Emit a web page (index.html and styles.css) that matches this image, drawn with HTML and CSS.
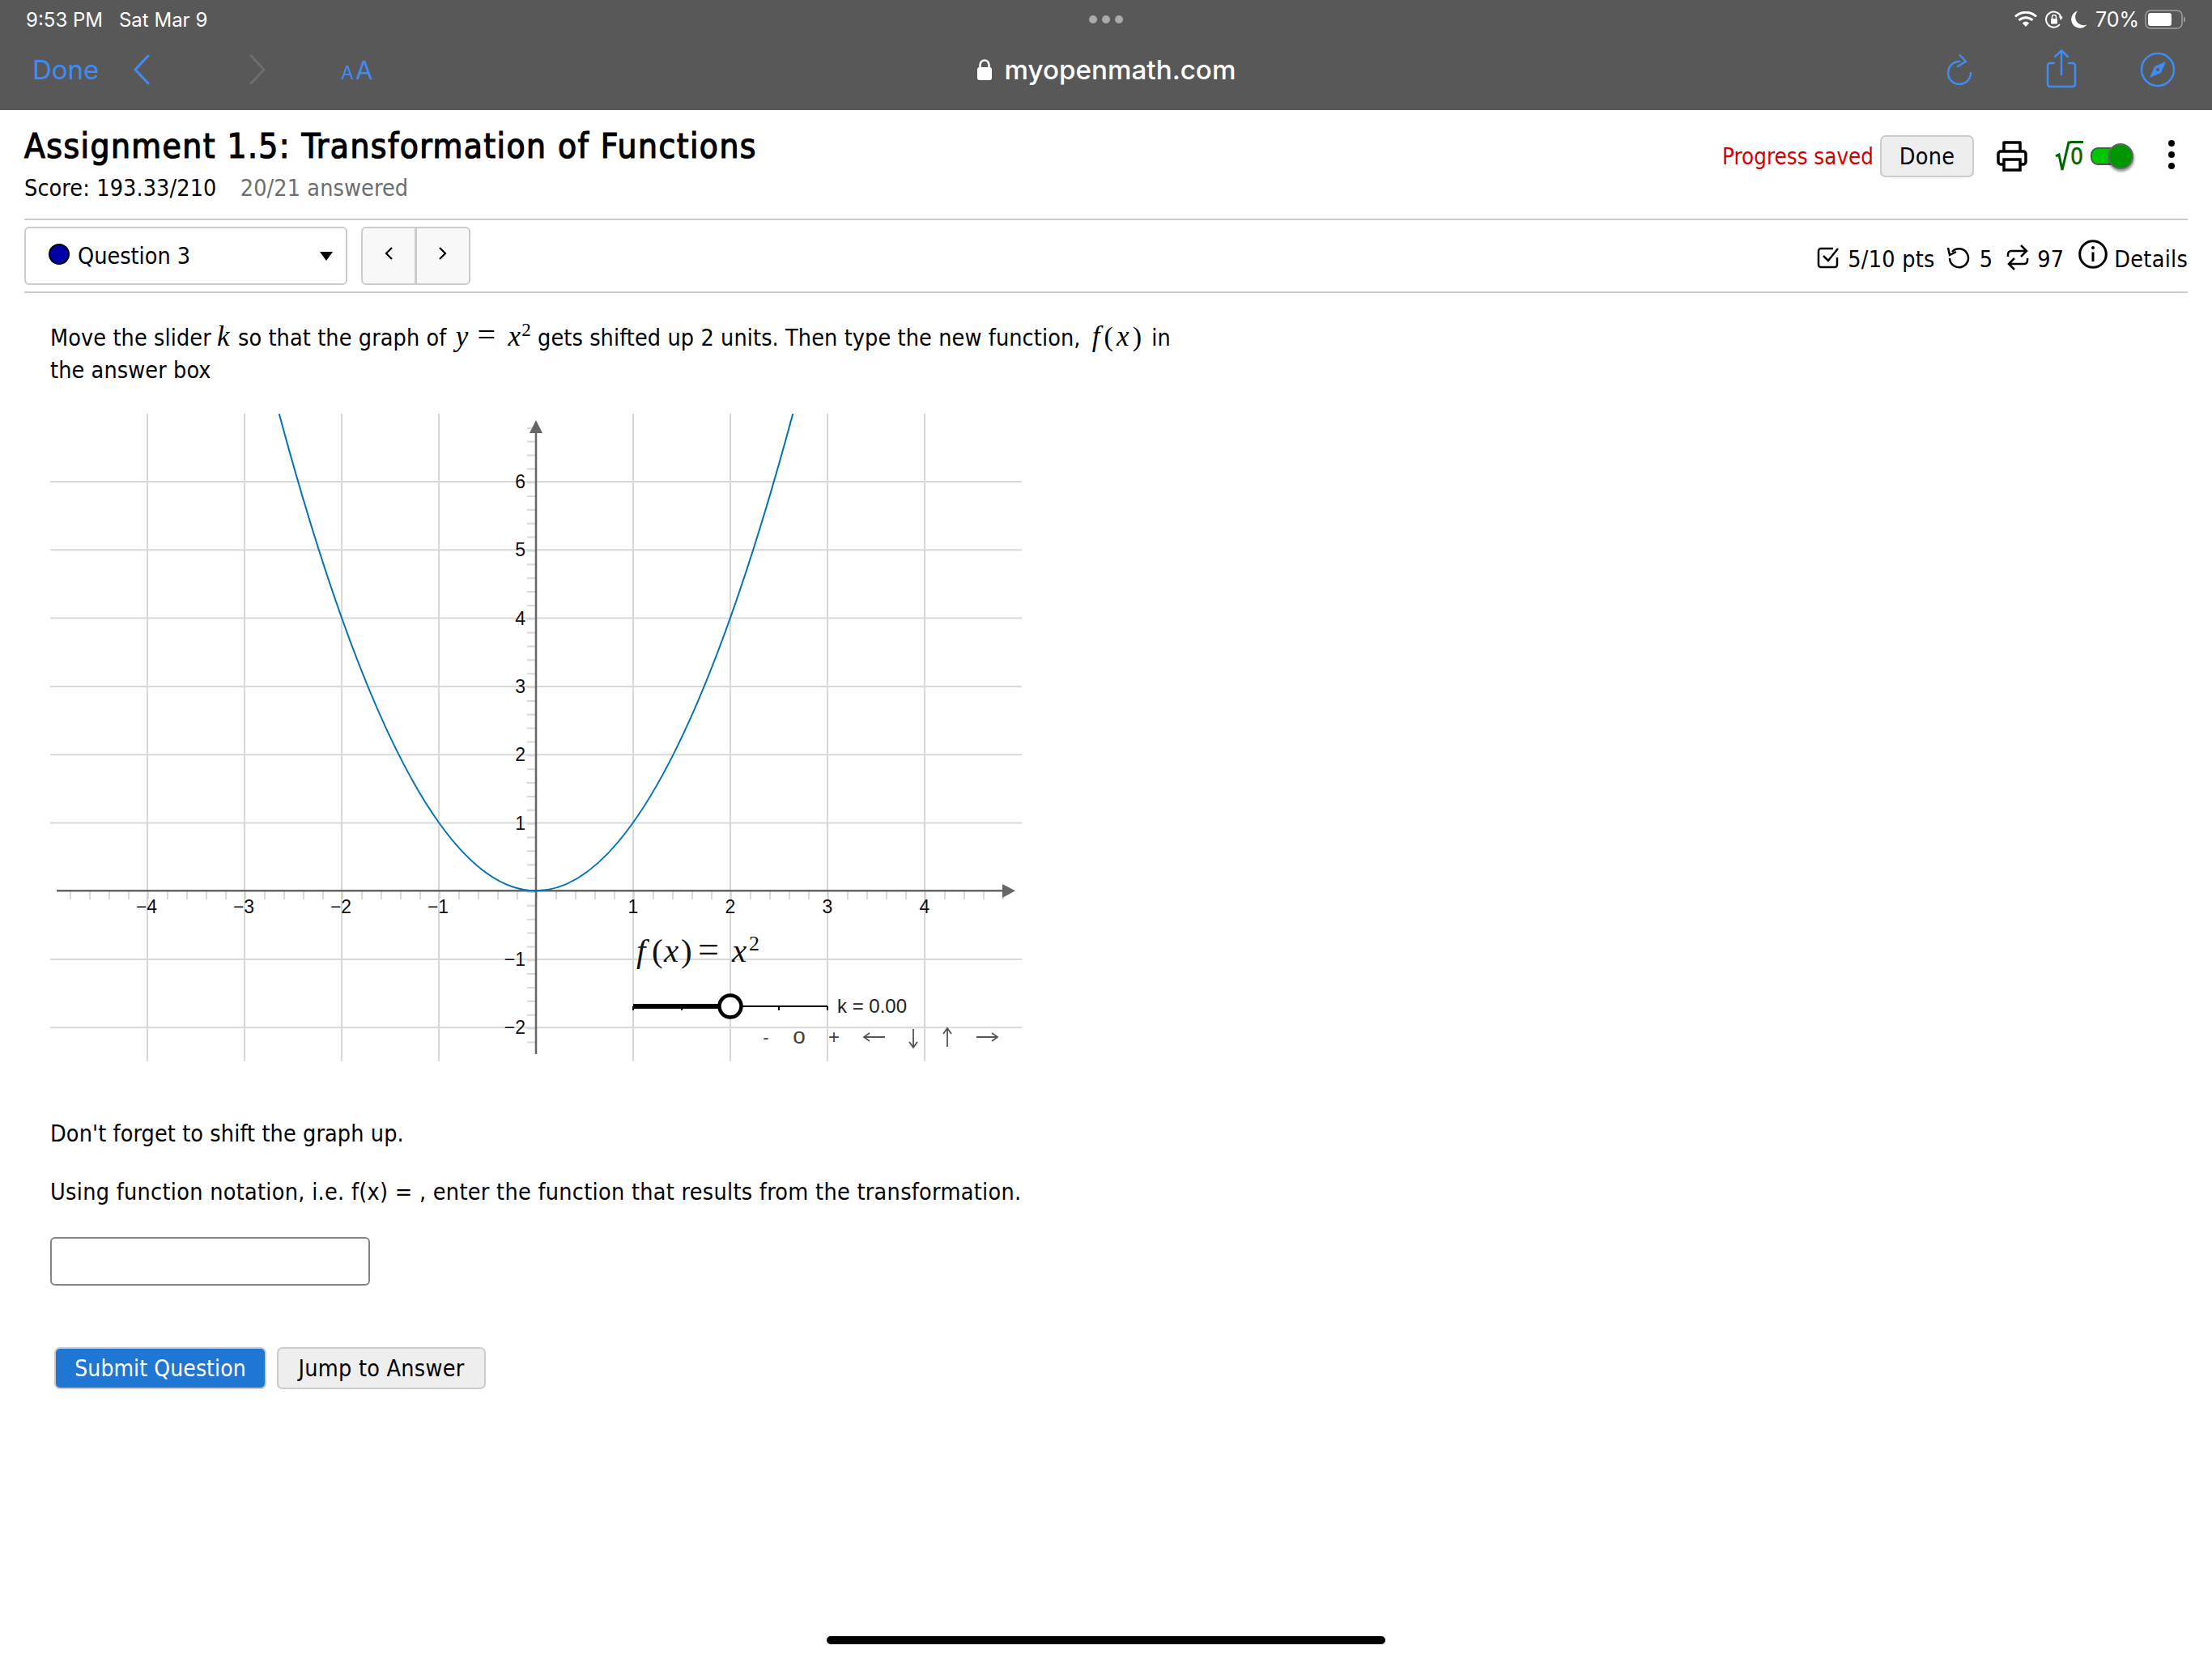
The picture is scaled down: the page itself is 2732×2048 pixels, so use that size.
FILE: index.html
```html
<!DOCTYPE html>
<html lang="en">
<head>
<meta charset="utf-8">
<title>Assignment 1.5</title>
<link rel="stylesheet" href="styles.css">
</head>
<body>
<header class="chrome">
  <div class="status">
    <div class="status-left"><span>9:53 PM</span><span>Sat Mar 9</span></div>
    <div class="dots"><i></i><i></i><i></i></div>
    <div class="status-right">
      <svg class="st-wifi" viewBox="0 0 28 20"><path d="M1 6.500C8.500 -0.500 19.500 -0.500 27 6.500M5.500 11C10.500 6.500 17.500 6.500 22.500 11" fill="none" stroke="#fff" stroke-width="3"/><path d="M9.800 14.500C12.300 12.300 15.700 12.300 18.200 14.500L14 19Z" fill="#fff"/></svg>
      <svg class="st-lock" viewBox="0 0 22 22"><path d="M18 17A9.500 9.500 0 1 1 19.500 8" fill="none" stroke="#fff" stroke-width="2"/><path d="M17 7l5 1-3 4z" fill="#fff"/><rect x="7" y="10" width="8" height="6.500" rx="1" fill="#fff"/><path d="M8.500 10V8a2.500 2.500 0 0 1 5 0v2" fill="none" stroke="#fff" stroke-width="1.500"/></svg>
      <svg class="st-moon" viewBox="0 0 20 22"><path d="M8 0.500A10.500 10.500 0 0 0 19.500 17.500A10.800 10.800 0 1 1 8 0.500Z" fill="#fff"/></svg>
      <span class="st-pct">70%</span>
      <svg class="st-batt" viewBox="0 0 50 24"><rect x="1" y="1" width="45" height="22" rx="6" fill="none" stroke="#a0a0a0" stroke-width="1.500"/><rect x="4" y="4" width="29" height="16" rx="3" fill="#fff"/><path d="M48 8.500c1.500.5 2 2 2 3.500s-.5 3-2 3.500z" fill="#a0a0a0"/></svg>
    </div>
  </div>
  <div class="toolbar">
    <div class="tb-left">
      <span class="tb-done">Done</span>
      <svg class="tb-back" viewBox="0 0 22 38"><path d="M19 2L3 19L19 36" fill="none" stroke="#408cf5" stroke-width="3" stroke-linecap="round" stroke-linejoin="round"/></svg>
      <svg class="tb-fwd" viewBox="0 0 22 38"><path d="M3 2L19 19L3 36" fill="none" stroke="#6e6e6e" stroke-width="3" stroke-linecap="round" stroke-linejoin="round"/></svg>
      <span class="tb-aa"><small>A</small>A</span>
    </div>
    <div class="tb-url">
      <svg class="tb-lock" viewBox="0 0 20 26"><rect x="1" y="10" width="18" height="16" rx="3" fill="#fff"/><path d="M4.500 11V7a5.500 5.500 0 0 1 11 0v4" fill="none" stroke="#fff" stroke-width="2.500"/></svg>
      <span>myopenmath.com</span>
    </div>
    <div class="tb-right">
      <svg class="tb-reload" viewBox="0 0 32 40"><path d="M15 10A14 14 0 1 0 29 24" fill="none" stroke="#408cf5" stroke-width="2.500" stroke-linecap="round"/><path d="M15.500 2L23 10L13 16" fill="none" stroke="#408cf5" stroke-width="2.500" stroke-linecap="round" stroke-linejoin="round"/></svg>
      <svg class="tb-share" viewBox="0 0 38 48"><path d="M11 17H5a3 3 0 0 0-3 3v23a3 3 0 0 0 3 3h28a3 3 0 0 0 3-3V20a3 3 0 0 0-3-3h-6" fill="none" stroke="#408cf5" stroke-width="2.500"/><path d="M19 31V2M11 9L19 1.500L27 9" fill="none" stroke="#408cf5" stroke-width="2.500" stroke-linecap="round" stroke-linejoin="round"/></svg>
      <svg class="tb-compass" viewBox="0 0 44 44"><circle cx="22" cy="22" r="20" fill="none" stroke="#408cf5" stroke-width="2.500"/><path d="M32 12L18 18L12 32L26 26Z" fill="#408cf5"/><circle cx="22" cy="22" r="2" fill="#585858"/></svg>
    </div>
  </div>
</header>

<main class="page">
  <section class="head">
    <div class="head-text">
      <h1>Assignment 1.5: Transformation of Functions</h1>
      <p class="score">Score: 193.33/210 <span class="answered">20/21 answered</span></p>
    </div>
    <div class="head-tools">
      <span class="saved">Progress saved</span>
      <button class="btn btn-done">Done</button>
      <svg class="ic-print" viewBox="0 0 38 38"><path d="M9 13V2h20v11M9 29H5a3 3 0 0 1-3-3V16a3 3 0 0 1 3-3h28a3 3 0 0 1 3 3v10a3 3 0 0 1-3 3h-4" fill="none" stroke="#000" stroke-width="3.500" stroke-linejoin="round"/><rect x="9" y="23" width="20" height="13" fill="none" stroke="#000" stroke-width="3.500"/></svg>
      <span class="sqrt"><svg viewBox="0 0 20 38"><path d="M1 19L5 17L9 36L17 2H20" fill="none" stroke="#006400" stroke-width="3"/></svg><span class="sqrt-n">0</span></span>
      <span class="toggle"><i></i></span>
      <span class="kebab"><i></i><i></i><i></i></span>
    </div>
  </section>
  <section class="qbar">
    <div class="qselect"><i class="qdot"></i><span class="qname">Question 3</span><i class="qcaret"></i></div>
    <div class="qnav">
      <span class="qnav-btn"><svg viewBox="0 0 12 18"><path d="M10 2L3 9L10 16" fill="none" stroke="#000" stroke-width="2.200"/></svg></span>
      <span class="qnav-btn"><svg viewBox="0 0 12 18"><path d="M2 2L9 9L2 16" fill="none" stroke="#000" stroke-width="2.200"/></svg></span>
    </div>
    <div class="qmeta">
      <svg class="ic-check" viewBox="0 0 28 28"><path d="M25 14v9a3 3 0 0 1-3 3H5a3 3 0 0 1-3-3V6a3 3 0 0 1 3-3h15" fill="none" stroke="#000" stroke-width="2.500"/><path d="M8 12l6 6L26 3" fill="none" stroke="#000" stroke-width="2.500"/></svg>
      <span class="m-pts">5/10 pts</span>
      <svg class="ic-undo" viewBox="0 0 28 28"><path d="M6 7A11.500 11.500 0 1 1 3 15" fill="none" stroke="#000" stroke-width="2.500"/><path d="M1 2L3 11L11 7" fill="none" stroke="#000" stroke-width="2.500"/></svg>
      <span class="m-try">5</span>
      <svg class="ic-retry" viewBox="0 0 28 32"><path d="M2 15V12a4 4 0 0 1 4-4H25M18 1L25 8L18 15" fill="none" stroke="#000" stroke-width="2.500"/><path d="M26 17v3a4 4 0 0 1-4 4H3M10 17L3 24L10 31" fill="none" stroke="#000" stroke-width="2.500"/></svg>
      <span class="m-ret">97</span>
      <svg class="ic-info" viewBox="0 0 36 36"><circle cx="18" cy="18" r="16.300" fill="none" stroke="#000" stroke-width="3"/><path d="M18 15.500V27" stroke="#000" stroke-width="3"/><circle cx="18" cy="10" r="2" fill="#000"/></svg>
      <span class="m-det">Details</span>
    </div>
  </section>

  <section class="question">
    <p class="prompt">Move the slider <span class="math mk">k</span> so that the graph of <span class="math my">y</span> <span class="mathr meq">=</span> <span class="math mx">x</span><sup class="sup">2</sup> gets shifted up 2 units. Then type the new function, <span class="math mf">f</span><span class="mathr">(</span><span class="math mx2">x</span><span class="mathr mclose">)</span> in the answer box</p>

    <svg class="graph" viewBox="62 510 1200 800" width="1200" height="800">
      <g class="grid">
        <path d="M182 510V1310M302 510V1310M422 510V1310M542 510V1310M782 510V1310M902 510V1310M1022 510V1310M1142 510V1310"/>
        <path d="M62 594H1262M62 678.300H1262M62 762.600H1262M62 846.900H1262M62 931.200H1262M62 1015.500H1262M62 1184H1262M62 1268.300H1262"/>
      </g>
      <line class="ticks" x1="86" y1="1105" x2="1240" y2="1105" stroke-width="10" stroke-dasharray="2 22"/>
      <line class="ticks" x1="656.500" y1="526.700" x2="656.500" y2="1302" stroke-width="11" stroke-dasharray="2 14.860"/>
      <path class="axis" d="M70 1099.300H1240M662 530V1301"/>
      <path class="arrow" d="M1254 1099.300L1238 1091V1108ZM662 518L654 534H670Z"/>
      <path class="curve" d="M344.700 510Q662 1688.600 979.300 510"/>
      <g class="tick-x">
        <text x="181" y="1127">−4</text><text x="301" y="1127">−3</text><text x="421" y="1127">−2</text><text x="541" y="1127">−1</text>
        <text x="782" y="1127">1</text><text x="902" y="1127">2</text><text x="1022" y="1127">3</text><text x="1142" y="1127">4</text>
      </g>
      <g class="tick-y">
        <text x="649" y="602">6</text><text x="649" y="686">5</text><text x="649" y="771">4</text><text x="649" y="855">3</text><text x="649" y="939">2</text><text x="649" y="1024">1</text><text x="649" y="1192">−1</text><text x="649" y="1276">−2</text>
      </g>
      <text class="fx" y="1187"><tspan class="it" x="786">f</tspan><tspan x="805">(</tspan><tspan class="it" x="820">x</tspan><tspan x="841">)</tspan><tspan class="fx-eq" x="862">=</tspan><tspan class="it" x="904">x</tspan><tspan class="fx-sup" x="925" y="1173">2</tspan></text>
      <path class="slider-thin" d="M902 1242H1022M842 1242V1247M962 1242V1247M1022 1242V1247M782 1242V1247"/>
      <path class="slider-thick" d="M782 1242H902"/>
      <circle class="slider-knob" cx="902" cy="1242" r="13.500"/>
      <text class="k" x="1034" y="1250">k = 0.00</text>
      <g class="ctl">
        <text class="ctl-small" x="946" y="1288">-</text><text class="ctl-o" x="987" y="1288">o</text><text class="ctl-plus" x="1030" y="1288">+</text>
      </g>
      <path class="ctl-arrows" d="M1067 1280H1093M1074 1275L1067 1280L1074 1285M1128 1270V1292M1123 1286L1128 1293L1133 1286M1170 1292V1270M1165 1276L1170 1269L1175 1276M1206 1280H1232M1225 1275L1232 1280L1225 1285"/>
    </svg>

    <p class="hint">Don't forget to shift the graph up.</p>
    <p class="instr">Using function notation, i.e. f(x) = , enter the function that results from the transformation.</p>
    <input class="answer" type="text" aria-label="answer">
    <div class="actions">
      <button class="btn btn-primary">Submit Question</button>
      <button class="btn btn-plain">Jump to Answer</button>
    </div>
  </section>
</main>
<div class="home"><i></i></div>
</body>
</html>
```
FILE: styles.css
```css
* { box-sizing: border-box; }
html, body { margin: 0; padding: 0; }
body {
  width: 2732px;
  height: 2048px;
  background: #fff;
  color: #000;
  font-family: "DejaVu Sans", sans-serif;
  font-stretch: condensed;
  font-size: 28.5px;
  letter-spacing: .25px;
  display: flex;
  flex-direction: column;
  overflow: hidden;
}
.chrome { height: 136px; background: #585858; font-family: Inter, sans-serif; font-stretch: normal; letter-spacing: 0; flex: none; }

.status { height: 48px; display: grid; grid-template-columns: 1fr auto 1fr; align-items: center; padding: 0 32px; color: #fff; font-size: 24px; }
.status-left { display: flex; gap: 20px; }
.dots { display: flex; gap: 6px; }
.dots i { width: 10px; height: 10px; border-radius: 50%; background: #aaa; }
.status-right { display: flex; align-items: center; justify-content: flex-end; gap: 10px; margin-right: 1px; }
.st-wifi { width: 28px; height: 20px; }
.st-lock { width: 22px; height: 22px; }
.st-moon { width: 20px; height: 22px; }
.st-pct { font-size: 25px; }
.st-batt { width: 50px; height: 24px; margin-left: -3px; }

.toolbar { height: 88px; display: grid; grid-template-columns: 1fr auto 1fr; align-items: center; padding-bottom: 12px; }
.tb-left { display: flex; align-items: center; padding-left: 40px; color: #408cf5; }
.tb-done { font-size: 33px; width: 124px; }
.tb-back { width: 22px; height: 38px; }
.tb-fwd { width: 22px; height: 38px; margin-left: 121px; }
.tb-aa { font-size: 31px; margin-left: 92px; }
.tb-aa small { font-size: 23px; margin-right: 2px; }
.tb-url { display: flex; align-items: center; gap: 15px; color: #fff; font-size: 33.2px; font-weight: 500; }
.tb-lock { width: 20px; height: 26px; }
.tb-right { display: flex; align-items: center; justify-content: flex-end; padding-right: 45px; }
.tb-reload { width: 32px; height: 40px; }
.tb-share { width: 38px; height: 48px; margin-left: 90px; margin-bottom: 2px; }
.tb-compass { width: 44px; height: 44px; margin-left: 78px; }

.page { padding: 0 30px; flex: 1; }

.head { height: 136px; border-bottom: 2px solid #ccc; display: flex; justify-content: space-between; }
h1 { margin: 0; padding-top: 20px; font-size: 42px; line-height: 50px; font-weight: 400; letter-spacing: 1.450px; -webkit-text-stroke: 1.200px #000; }
.score { margin: 0; padding-top: 8px; line-height: 38px; letter-spacing: .1px; }
.answered { color: #6e6e6e; margin-left: 21px; }
.head-tools { display: flex; align-items: center; height: 114px; }
.saved { color: #d40000; font-size: 27.500px; letter-spacing: 0; }
.btn { font: inherit; font-stretch: condensed; letter-spacing: inherit; border-radius: 7px; border: 2px solid #ccc; background: #eee; color: #000; padding: 0; }
.btn-done { width: 116px; height: 52px; margin-left: 8px; }
.ic-print { width: 38px; height: 38px; margin-left: 28px; }
.sqrt { display: flex; align-items: center; margin-left: 34px; color: #006400; width: 44px; }
.sqrt svg { width: 20px; height: 38px; }
.sqrt-n { font-size: 28px; line-height: 34px; height: 36px; border-top: 3px solid #006400; margin-left: -1px; margin-top: -2px; -webkit-text-stroke: .5px #006400; }
.toggle { width: 52px; height: 32px; display: flex; align-items: center; position: relative; }
.toggle::before { content: ""; width: 36px; height: 18px; border-radius: 9px; background: #00c800; border: 2px solid #555; }
.toggle i { position: absolute; right: -1px; top: 0; width: 32px; height: 32px; border-radius: 50%; background: #009600; border: 2px solid #666; box-shadow: 1px 3px 3px rgba(0,0,0,.4); }
.kebab { display: flex; flex-direction: column; gap: 6px; margin-left: 44px; margin-right: 16px; margin-top: -4px; }
.kebab i { width: 8px; height: 8px; border-radius: 50%; background: #000; }

.qbar { height: 90px; border-bottom: 2px solid #ccc; display: flex; align-items: flex-start; padding-top: 8px; }
.qselect { width: 399px; height: 72px; border: 2px solid #ccc; border-radius: 6px; display: flex; align-items: center; padding: 0 16px 0 28px; }
.qdot { width: 26px; height: 26px; border-radius: 50%; background: #0000a8; border: 2px solid #000; flex: none; margin-top: -4px; }
.qname { margin-left: 10px; flex: 1; letter-spacing: 0; }
.qcaret { width: 0; height: 0; border-left: 8px solid transparent; border-right: 8px solid transparent; border-top: 11px solid #000; }
.qnav { width: 135px; height: 72px; margin-left: 17px; display: flex; border: 2px solid #ccc; border-radius: 6px; background: #f8f8f8; }
.qnav-btn { flex: 1; display: flex; align-items: center; justify-content: center; padding-bottom: 6px; }
.qnav-btn + .qnav-btn { border-left: 3px solid #ccc; }
.qnav-btn svg { width: 12px; height: 18px; }
.qmeta { margin-left: auto; height: 72px; display: flex; align-items: center; padding-top: 8px; }
.qmeta svg { flex: none; }
.ic-check { width: 28px; height: 28px; margin-top: -4px; }
.m-pts { margin-left: 10px; }
.ic-undo { width: 28px; height: 28px; margin-left: 15px; margin-top: -4px; }
.m-try { margin-left: 12px; }
.ic-retry { width: 28px; height: 32px; margin-left: 17px; margin-top: -5px; }
.m-ret { margin-left: 10px; }
.ic-info { width: 36px; height: 36px; margin-left: 18px; margin-top: -13px; }
.m-det { margin-left: 8px; }

.question { padding-left: 32px; }
.prompt { margin: 0; width: 1400px; padding-top: 36px; line-height: 40px; letter-spacing: .1px; }
.math { font-family: "Liberation Serif", serif; font-style: italic; font-size: 35px; font-stretch: normal; line-height: 0; }
.mathr { font-family: "Liberation Serif", serif; font-size: 34px; font-stretch: normal; line-height: 0; }
.mk { margin-left: -1px; margin-right: 2px; }
.my { margin-left: 3px; }
.meq { margin: 0 3px; font-size: 40px; }
.mx { margin-left: 4px; }
.mx2 { margin: 0 4px; }
.mf { margin-left: 6px; margin-right: 5px; }
.mclose { margin-right: 4px; }
.sup { font-family: "Liberation Serif", serif; font-size: 23px; line-height: 0; vertical-align: 12px; margin-left: 1px; }

.graph { display: block; margin-top: 33px; }
.grid path { fill: none; stroke: #d9d9d9; stroke-width: 2; }
.ticks { stroke: #d9d9d9; }
.axis { fill: none; stroke: #666; stroke-width: 2.500; }
.arrow { fill: #666; }
.curve { fill: none; stroke: #0072b5; stroke-width: 2; }
.graph text { font-family: "Liberation Sans", sans-serif; font-stretch: normal; letter-spacing: 0; font-size: 23px; fill: #111; }
.tick-x text { text-anchor: middle; }
.tick-y text { text-anchor: end; }
.graph .fx { font-family: "Liberation Serif", serif; font-size: 41px; }
.it { font-style: italic; }
.graph .fx-eq { font-size: 46px; }
.graph .fx-sup { font-size: 26px; }
.slider-thin { fill: none; stroke: #000; stroke-width: 2; }
.slider-thick { fill: none; stroke: #000; stroke-width: 6; }
.slider-knob { fill: #fff; stroke: #000; stroke-width: 4.500; }
.graph .k { font-size: 24px; fill: #222; }
.graph .ctl text { fill: #444; text-anchor: middle; }
.graph .ctl .ctl-o { font-size: 28px; }
.graph .ctl .ctl-small { font-size: 22px; }
.graph .ctl .ctl-plus { font-size: 24px; }
.ctl-arrows { fill: none; stroke: #555; stroke-width: 1.800; }

.hint { margin: 0; padding-top: 70px; line-height: 40px; letter-spacing: .1px; }
.instr { margin: 0; padding-top: 32px; line-height: 40px; letter-spacing: .29px; }
.answer { display: block; width: 395px; height: 60px; margin-top: 35px; border: 2px solid #858585; border-radius: 6px; background: #fff; }
.actions { display: flex; gap: 13px; margin-top: 76px; padding-left: 5px; }
.btn-primary { width: 262px; height: 52px; background: #1f76d3; border-color: #ccc; color: #fff; font-size: 28px; letter-spacing: .1px; }
.btn-plain { width: 258px; height: 52px; }

.home { height: 27px; flex: none; display: flex; justify-content: center; }
.home i { width: 690px; height: 10px; border-radius: 5px; background: #000; }
```
